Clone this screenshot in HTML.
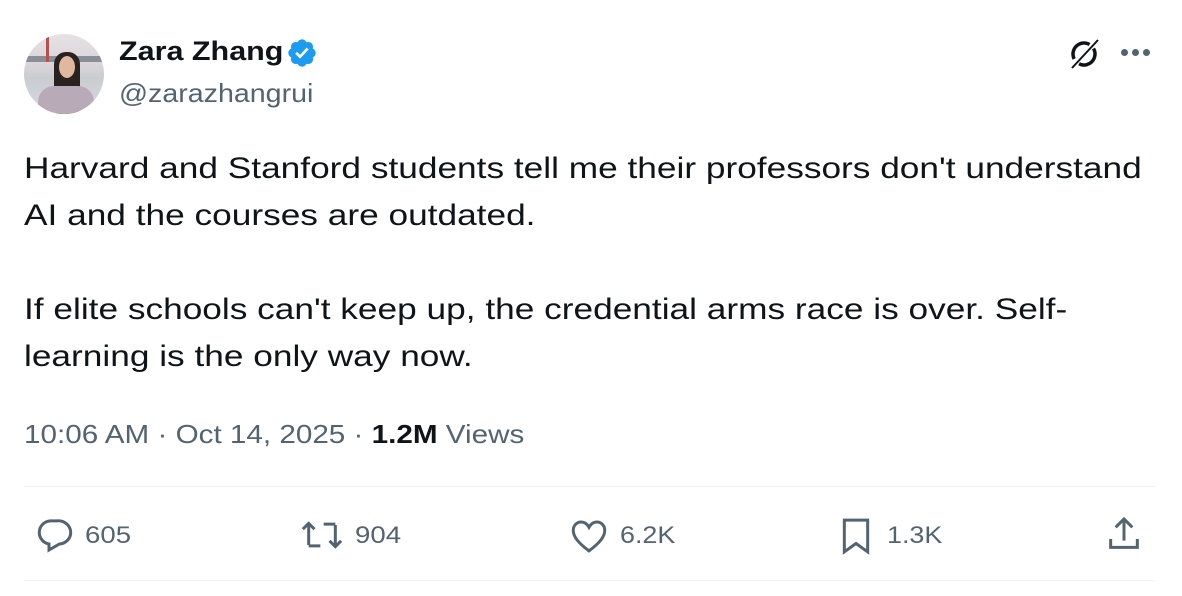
<!DOCTYPE html>
<html><head><style>
body{margin:0;width:1182px;height:596px;background:#fff;font-family:"Liberation Sans",Arial,sans-serif;color:#0f1419;position:relative;overflow:hidden}
.a{position:absolute;white-space:nowrap}
.g{color:#536471}
.s{transform-origin:0 0}
</style></head><body>
<div class="a" style="left:24px;top:34px;width:80px;height:80px;border-radius:50%;overflow:hidden;background:linear-gradient(#e6e2e4 0%,#d8d4d8 40%,#c9ccd0 55%,#d8dbde 100%)">
 <div class="a" style="left:0;top:22px;width:80px;height:6px;background:#8a8f96"></div>
 <div class="a" style="left:22px;top:2px;width:3px;height:26px;background:#b5504a"></div>
 <div class="a" style="left:30px;top:18px;width:26px;height:62px;background:#2a2220;border-radius:12px 12px 4px 4px"></div>
 <div class="a" style="left:35px;top:22px;width:16px;height:22px;background:#e0b8a0;border-radius:50%"></div>
 <div class="a" style="left:14px;top:52px;width:56px;height:30px;background:#b9aab8;border-radius:16px 16px 0 0"></div>
</div>
<div class="a s" style="left:119px;top:36px;font-size:27px;font-weight:bold;transform:scaleX(1.13)">Zara Zhang</div>
<svg class="a" style="left:286px;top:37px" width="32" height="32" viewBox="0 0 24 24"><path fill="#1d9bf0" d="M22.25 12c0-1.43-.88-2.67-2.19-3.34.46-1.39.2-2.9-.81-3.910s-2.52-1.27-3.91-.81c-.66-1.310-1.910-2.190-3.340-2.190s-2.670.880-3.330 2.190c-1.400-.460-2.910-.200-3.920.810s-1.260 2.520-.800 3.910c-1.310.670-2.200 1.910-2.200 3.340s.890 2.670 2.200 3.340c-.460 1.390-.210 2.900.800 3.910s2.520 1.260 3.910.810c.670 1.310 1.910 2.190 3.340 2.190s2.680-.880 3.340-2.190c1.390.450 2.900.200 3.910-.810s1.270-2.520.810-3.910c1.310-.670 2.190-1.910 2.190-3.340z"/><path fill="#fff" d="M10.54 16.2l-3.6-3.6 1.42-1.42 2.18 2.19 4.93-5.37 1.48 1.36z"/></svg>
<div class="a g s" style="left:119px;top:78px;font-size:26px;transform:scaleX(1.1)">@zarazhangrui</div>
<svg class="a" style="left:1066px;top:36px" width="36" height="36" viewBox="0 0 36 36"><circle cx="18" cy="18" r="11" fill="none" stroke="#0f1419" stroke-width="3.5" stroke-dasharray="28 7" transform="rotate(-30 18 18)"/><path d="M6 32L32 4" stroke="#0f1419" stroke-width="2"/></svg>
<div class="a" style="left:1121px;top:49px;width:7px;height:7px;border-radius:50%;background:#536471"></div>
<div class="a" style="left:1132px;top:49px;width:7px;height:7px;border-radius:50%;background:#536471"></div>
<div class="a" style="left:1143px;top:49px;width:7px;height:7px;border-radius:50%;background:#536471"></div>
<div class="a s" style="left:24px;top:145px;font-size:30px;line-height:47px;transform:scaleX(1.175)">Harvard and Stanford students tell me their professors don't understand<br>AI and the courses are outdated.<br><br>If elite schools can't keep up, the credential arms race is over. Self-<br>learning is the only way now.</div>
<div class="a g s" style="left:24px;top:419px;font-size:26px;transform:scaleX(1.14)">10:06 AM · Oct 14, 2025 · <b style="color:#0f1419">1.2M</b> Views</div>
<div class="a" style="left:24px;top:486px;width:1132px;height:1px;background:#eff3f4"></div>
<div class="a" style="left:24px;top:580px;width:1132px;height:1px;background:#eff3f4"></div>
<svg class="a" style="left:34px;top:515px" width="40" height="40" viewBox="0 0 24 24"><path fill="none" stroke="#536471" stroke-width="1.8" d="M10 3.5h4a7.5 7 0 0 1 1 14L9 21v-3.6A7 7 0 0 1 10 3.5z"/></svg>
<div class="a g s" style="left:85px;top:522px;font-size:24px;transform:scaleX(1.15)">605</div>
<svg class="a" style="left:300px;top:515px" width="44" height="40" viewBox="0 0 26 24"><path fill="none" stroke="#536471" stroke-width="1.8" d="M5 18V5M1.5 8.5L5 5l3.5 3.5M5 18.5h7M21 6v13M17.5 15.5L21 19l3.5-3.5M21 5.5h-7"/></svg>
<div class="a g s" style="left:355px;top:522px;font-size:24px;transform:scaleX(1.15)">904</div>
<svg class="a" style="left:568px;top:515px" width="42" height="42" viewBox="0 0 24 24"><path fill="none" stroke="#536471" stroke-width="1.7" d="M12 20.5C6 16 3 12.5 3 8.8 3 6 5 4 7.5 4c2 0 3.5 1.2 4.5 3 1-1.8 2.5-3 4.5-3C19 4 21 6 21 8.8c0 3.7-3 7.2-9 11.7z"/></svg>
<div class="a g s" style="left:620px;top:522px;font-size:24px;transform:scaleX(1.12)">6.2K</div>
<svg class="a" style="left:836px;top:515px" width="40" height="42" viewBox="0 0 24 24"><path fill="none" stroke="#536471" stroke-width="1.8" d="M5 2.5h14v19l-7-5-7 5z"/></svg>
<div class="a g s" style="left:887px;top:522px;font-size:24px;transform:scaleX(1.12)">1.3K</div>
<svg class="a" style="left:1104px;top:514px" width="40" height="40" viewBox="0 0 24 24"><path fill="none" stroke="#536471" stroke-width="1.8" d="M12 3v13M7 8l5-5 5 5M4 15v5h16v-5"/></svg>
</body></html>
